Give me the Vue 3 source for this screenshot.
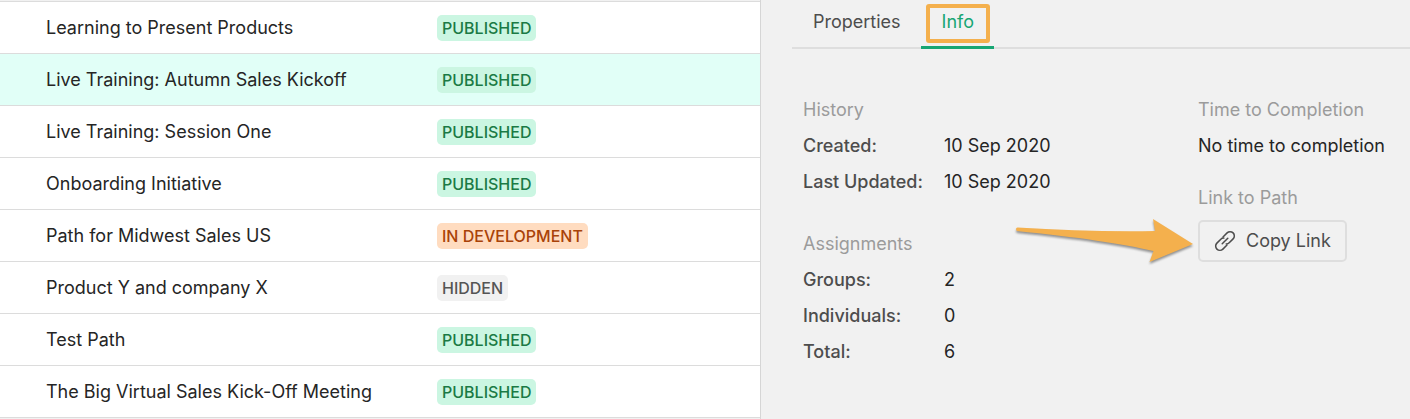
<script setup>
import { ref } from 'vue'

const paths = [
  { name: 'Learning to Present Products', status: 'published' },
  { name: 'Live Training: Autumn Sales Kickoff', status: 'published' },
  { name: 'Live Training: Session One', status: 'published' },
  { name: 'Onboarding Initiative', status: 'published' },
  { name: 'Path for Midwest Sales US', status: 'development' },
  { name: 'Product Y and company X', status: 'hidden' },
  { name: 'Test Path', status: 'published' },
  { name: 'The Big Virtual Sales Kick-Off Meeting', status: 'published' }
]
const labels = { published: 'PUBLISHED', development: 'IN DEVELOPMENT', hidden: 'HIDDEN' }
const selected = ref(1)

const groups = [
  { title: 'History', rows: [['Created:', '10 Sep 2020'], ['Last Updated:', '10 Sep 2020']] },
  { title: 'Assignments', rows: [['Groups:', '2'], ['Individuals:', '0'], ['Total:', '6']] }
]
</script>

<template>
  <div class="page">
    <main class="list">
      <table class="paths">
        <tbody>
          <tr
            v-for="(path, i) in paths"
            :key="path.name"
            :class="{ selected: i === selected }"
            @click="selected = i"
          >
            <td class="name">{{ path.name }}</td>
            <td><span class="badge" :class="path.status">{{ labels[path.status] }}</span></td>
          </tr>
        </tbody>
      </table>
    </main>

    <aside class="panel">
      <div class="tabs" role="tablist">
        <button class="tab" type="button" role="tab" aria-selected="false">Properties</button>
        <button class="tab active" type="button" role="tab" aria-selected="true">
          Info<span class="highlight"></span>
        </button>
      </div>

      <div class="details">
        <div class="column">
          <section v-for="group in groups" :key="group.title" class="group">
            <h2>{{ group.title }}</h2>
            <dl>
              <template v-for="row in group.rows" :key="row[0]">
                <dt>{{ row[0] }}</dt>
                <dd>{{ row[1] }}</dd>
              </template>
            </dl>
          </section>
        </div>

        <div class="column">
          <section class="time">
            <h2>Time to Completion</h2>
            <p>No time to completion</p>
          </section>
          <section class="link">
            <h2>Link to Path</h2>
            <div class="action">
              <svg class="arrow" width="184" height="52" viewBox="0 0 184 52" aria-hidden="true">
                <path d="M4 11Q4 9.500 5.500 9.500Q75 14 143 13L141 1L181 26L137.500 44L141.500 33C112 26 65 19 5 13Q4 12.500 4 11Z" />
              </svg>
              <button class="copy" type="button">
                <svg width="22" height="22" viewBox="0 0 22 22" aria-hidden="true">
                  <path d="M9 7L13.100 2.900A4.100 4.100 0 0 1 19.100 8.900L15.200 12.800Q14 14 12.200 13.900" />
                  <path d="M13 15L8.900 19.100A4.100 4.100 0 0 1 2.900 13.100L6.800 9.200Q8 8 9.800 8.100" />
                  <path d="M8.200 13.800L13.800 8.200" />
                </svg>
                Copy Link
              </button>
            </div>
          </section>
        </div>
      </div>
    </aside>
  </div>
</template>

<style>
body {
  margin: 0;
  background: #f1f1f1;
}
</style>

<style scoped>
.page {
  display: grid;
  grid-template-columns: 761fr 649fr;
  min-height: 100vh;
  font-family: Inter, "Liberation Sans", sans-serif;
  font-size: 18px;
  line-height: 24px;
  color: #252525;
}

.list {
  padding-top: 1px;
  border-right: 1px solid #d6d6d6;
}

.paths {
  width: 100%;
  table-layout: fixed;
  border-spacing: 0;
  border-top: 1px solid #dcdcdc;
  background: #fff;
}

.paths td {
  box-sizing: border-box;
  height: 52px;
  padding: 1px 0 0;
  border-bottom: 1px solid #dcdcdc;
}

.paths .name {
  width: 437px;
  padding-left: 46px;
}

.paths .selected {
  background: #e1fff7;
}

.badge {
  display: inline-block;
  padding: 0 5px;
  border-radius: 5px;
  font-size: 16px;
  line-height: 26px;
  font-weight: 500;
  vertical-align: middle;
}

.published {
  background: #cbf6e2;
  color: #1b7a45;
}

.development {
  background: #ffdcc0;
  color: #a94208;
}

.hidden {
  background: #f1f1f1;
  color: #555;
}

.panel {
  padding-left: 31px;
}

.tabs {
  display: flex;
  height: 47px;
  border-bottom: 2px solid #dedede;
}

.tab {
  position: relative;
  box-sizing: border-box;
  height: 49px;
  padding: 0 20px 2px 21px;
  border: 0;
  border-bottom: 3px solid transparent;
  background: none;
  font: inherit;
  color: #4d4d4d;
}

.tab.active {
  border-bottom-color: #17a673;
  color: #17a673;
}

.highlight {
  position: absolute;
  inset: 4px 4px 3px 5px;
  border: 4px solid #f4b04d;
  border-radius: 3px;
}

.details {
  display: grid;
  grid-template-columns: 395fr 212fr;
  padding: 49px 0 0 11px;
}

h2,
p,
dl,
dd {
  margin: 0;
}

h2 {
  font-size: 18px;
  font-weight: 400;
  color: #9b9b9b;
}

.group {
  margin-bottom: 38px;
}

dl {
  display: grid;
  grid-template-columns: 141px 1fr;
  row-gap: 12px;
  margin-top: 12px;
}

dt {
  font-weight: 500;
  color: #4d4d4d;
}

.time p {
  margin-top: 12px;
}

.link {
  margin-top: 28px;
}

.action {
  position: relative;
  width: fit-content;
  margin-top: 10px;
}

.arrow {
  position: absolute;
  right: 100%;
  top: -2px;
  margin-right: 2px;
  fill: #f4b04d;
  filter: drop-shadow(0 2px 1px rgb(0 0 0 / 40%));
}

.copy {
  display: flex;
  align-items: center;
  gap: 10px;
  height: 42px;
  padding: 0 14px;
  border: 2px solid #dedede;
  border-radius: 5px;
  background: #f1f1f1;
  font: inherit;
  color: #4d4d4d;
}

.copy svg {
  fill: none;
  stroke: #4d4d4d;
  stroke-width: 1.5;
  stroke-linecap: round;
}
</style>
